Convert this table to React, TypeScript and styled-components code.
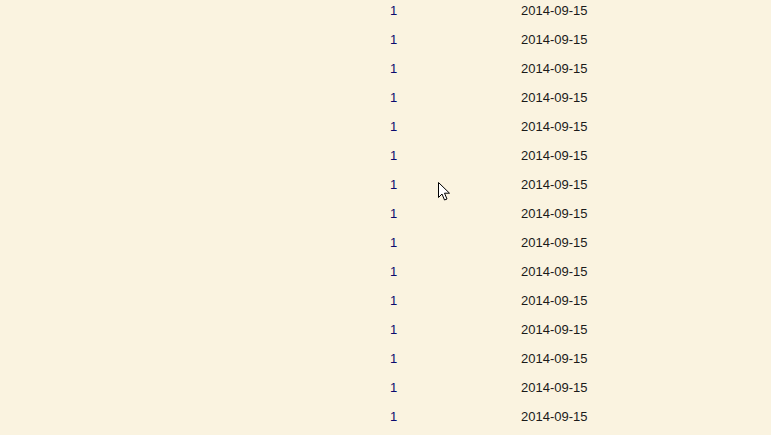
import React from "react";
import styled, { createGlobalStyle } from "styled-components";

const Global = createGlobalStyle`
  html, body { margin: 0; padding: 0; background: #faf3e0; }
  body { font-family: "Liberation Sans", Arial, sans-serif; overflow: hidden; }
`;

const Page = styled.div`
  position: relative;
  width: 771px;
  height: 435px;
  overflow: hidden;
  background: #faf3e0;
`;

const Table = styled.div`
  display: grid;
  grid-template-columns: 131px 120px;
  grid-auto-rows: 29px;
  padding-left: 390px;
`;

const Cell = styled.div<{ $tone: "id" | "date" }>`
  box-sizing: border-box;
  padding-top: 3px;
  font-size: 13px;
  line-height: 15px;
  color: ${(p) => (p.$tone === "id" ? "#0a0a6e" : "#1a1a1a")};
`;

const Pointer = styled.svg`
  position: absolute;
  left: 438px;
  top: 182px;
`;

const rows = Array.from({ length: 15 }, () => ({ id: "1", date: "2014-09-15" }));

export default function App() {
  return (
    <Page>
      <Global />
      <Table>
        {rows.map((r, i) => (
          <React.Fragment key={i}>
            <Cell $tone="id">{r.id}</Cell>
            <Cell $tone="date">{r.date}</Cell>
          </React.Fragment>
        ))}
      </Table>
      <Pointer width="13" height="20" viewBox="0 0 13 20">
        <path
          d="M0.5 0.5 L0.5 15.5 L4 12 L6.5 18 L9 17 L6.5 11.2 L11.5 11.2 Z"
          fill="#fff"
          stroke="#000"
          strokeWidth="1"
          strokeLinejoin="miter"
        />
      </Pointer>
    </Page>
  );
}
